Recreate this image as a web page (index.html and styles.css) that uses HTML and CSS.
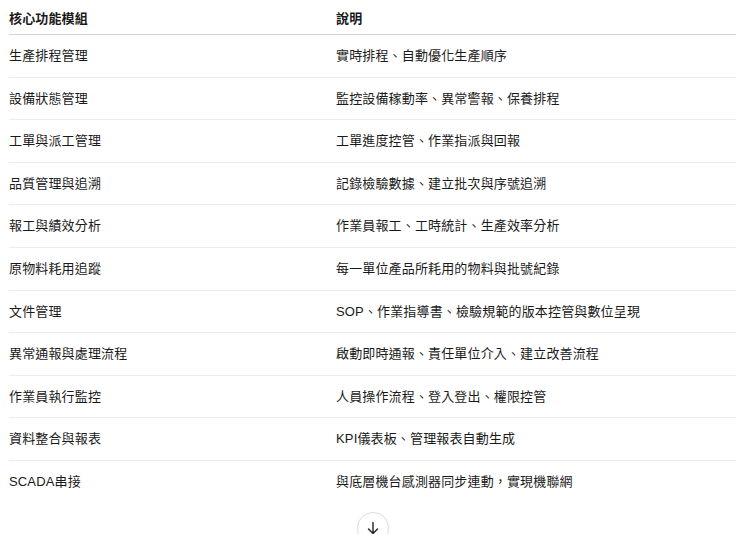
FILE: index.html
```html
<!DOCTYPE html>
<html lang="zh-Hant">
<head>
<meta charset="utf-8">
<link rel="stylesheet" href="styles.css">
</head>
<body>
<div class="wrap">
<table class="tbl">
<thead>
<tr><th class="c1">核心功能模組</th><th class="c2">說明</th></tr>
</thead>
<tbody>
<tr><td>生產排程管理</td><td>實時排程、自動優化生產順序</td></tr>
<tr><td>設備狀態管理</td><td>監控設備稼動率、異常警報、保養排程</td></tr>
<tr><td>工單與派工管理</td><td>工單進度控管、作業指派與回報</td></tr>
<tr><td>品質管理與追溯</td><td>記錄檢驗數據、建立批次與序號追溯</td></tr>
<tr><td>報工與績效分析</td><td>作業員報工、工時統計、生產效率分析</td></tr>
<tr><td>原物料耗用追蹤</td><td>每一單位產品所耗用的物料與批號紀錄</td></tr>
<tr><td>文件管理</td><td>SOP、作業指導書、檢驗規範的版本控管與數位呈現</td></tr>
<tr><td>異常通報與處理流程</td><td>啟動即時通報、責任單位介入、建立改善流程</td></tr>
<tr><td>作業員執行監控</td><td>人員操作流程、登入登出、權限控管</td></tr>
<tr><td>資料整合與報表</td><td>KPI儀表板、管理報表自動生成</td></tr>
<tr><td>SCADA串接</td><td>與底層機台感測器同步連動，實現機聯網</td></tr>
</tbody>
</table>
</div>
<button class="scroll-btn" aria-label="scroll down">
<svg width="16" height="16" viewBox="0 0 16 16" fill="none" stroke="#222" stroke-width="1.4" stroke-linecap="round" stroke-linejoin="round"><path d="M8 2.5v11M3.5 9l4.5 4.5L12.5 9"/></svg>
</button>
</body>
</html>
```
FILE: styles.css
```css
html, body {
  margin: 0;
  padding: 0;
  background: #fff;
  overflow: hidden;
  height: 534px;
}
body {
  font-family: "Liberation Sans", "Noto Sans CJK TC", sans-serif;
  font-size: 13px;
  letter-spacing: 0.15px;
  color: #1a1a1a;
  position: relative;
}
.wrap {
  padding-left: 9px;
  width: 727px;
}
.tbl {
  width: 727px;
  border-collapse: collapse;
  table-layout: fixed;
}
.tbl th, .tbl td {
  text-align: left;
  padding: 0;
  vertical-align: middle;
}
.tbl th {
  font-weight: 600;
  padding-top: 9px;
  padding-bottom: 5px;
  line-height: 20px;
  border-bottom: 1px solid #d4d4d4;
}
.c1 { width: 327px; }
.tbl td {
  padding-top: 11px;
  padding-bottom: 11px;
  line-height: 19.6px;
  border-bottom: 1px solid #ececec;
}
.tbl tbody tr:last-child td {
  border-bottom: none;
}
.scroll-btn {
  position: absolute;
  left: 357px;
  top: 512px;
  width: 32px;
  height: 32px;
  border-radius: 50%;
  border: 1px solid #dedede;
  background: #fff;
  display: flex;
  align-items: center;
  justify-content: center;
  padding: 0;
  box-shadow: 0 1px 3px rgba(0,0,0,0.06);
}
```
